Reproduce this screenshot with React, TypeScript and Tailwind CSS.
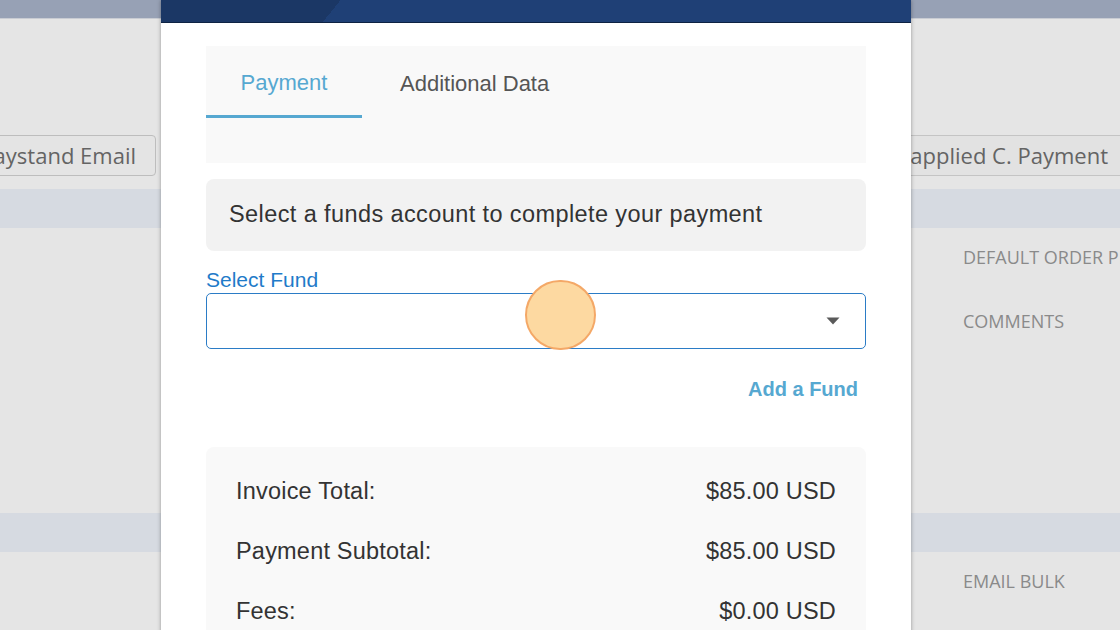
import React from "react";

export default function App() {
  return (
    <div className="relative w-[1120px] h-[630px] overflow-hidden bg-[#e5e5e5] font-['Open_Sans',sans-serif]">
      {/* Background page */}
      <div className="flex flex-col w-full">
        <div className="h-[19px] bg-[#97a1b5] border-b border-[#c9ccd3]" />
        <div className="h-[116px]" />
        <div className="relative h-[41px] flex items-stretch">
          <div className="w-[156px] flex justify-end overflow-hidden">
            <div className="shrink-0 h-[41px] px-[19px] flex items-center rounded-[4px] border border-[#bdbdbd] bg-[#e4e4e4] text-[22px] text-[#646464] whitespace-nowrap">
              Paystand Email
            </div>
          </div>
          <div className="flex-1 flex justify-end mr-[-30px]">
            <div className="shrink-0 h-[41px] pl-[20px] pr-[42px] flex items-center border-y border-[#c4c4c4] bg-[#e2e2e2] text-[22px] text-[#646464] whitespace-nowrap">
              Unapplied C. Payment
            </div>
          </div>
        </div>
        <div className="h-[13px]" />
        <div className="h-[39px] bg-[#d6dae1]" />
        <div className="flex justify-end">
          <div className="w-[157px] flex flex-col text-[18px] text-[#8a8a8a] whitespace-nowrap overflow-hidden">
            <div className="mt-[17px] h-[24px] leading-[24px]">DEFAULT ORDER PREFERENCES</div>
            <div className="mt-[40px] h-[24px] leading-[24px]">COMMENTS</div>
          </div>
        </div>
        <div className="h-[180px]" />
        <div className="h-[39px] bg-[#d6dae1]" />
        <div className="flex justify-end">
          <div className="w-[157px] text-[18px] text-[#8a8a8a] whitespace-nowrap">
            <div className="mt-[17px] h-[24px] leading-[24px]">EMAIL BULK</div>
          </div>
        </div>
      </div>

      {/* Modal */}
      <div className="absolute left-[161px] top-0 w-[750px] h-[640px] bg-white shadow-[0_0_4px_rgba(0,0,0,0.35)] font-['Liberation_Sans',Arial,sans-serif] flex flex-col">
        <div className="h-[23px] shrink-0 bg-[linear-gradient(129deg,#1b3765_23.4%,#1f4076_23.4%)] border-b border-[#0e2343]" />
        <div className="flex flex-col px-[45px] pt-[23px]">
          {/* Tabs */}
          <div className="h-[117px] bg-[#f9f9f9] flex flex-col">
            <div className="flex h-[72px]">
              <div className="w-[156px] flex items-center justify-center border-b-[3px] border-[#56a8d1] text-[22px] text-[#56a8d1] pt-[3px]">
                Payment
              </div>
              <div className="pl-[38px] pr-[38px] flex items-center text-[22px] text-[#555555] pt-[3px]">
                Additional Data
              </div>
            </div>
          </div>

          {/* Info */}
          <div className="mt-[16px] h-[72px] rounded-[8px] bg-[#f2f2f2] flex items-center pl-[23px] text-[23.5px] tracking-[0.4px] text-[#333333]">
            Select a funds account to complete your payment
          </div>

          {/* Select fund */}
          <div className="mt-[16px] h-[26px] leading-[26px] text-[21px] text-[#1f7bc9]">Select Fund</div>
          <div className="relative h-[56px] rounded-[5px] border-[1.5px] border-[#2b7cc6] flex items-center justify-end pr-[25px]">
            <svg width="14" height="8" viewBox="0 0 14 8">
              <path d="M0.5 0.5 L13.5 0.5 L7 7.5 Z" fill="#5a5a5a" />
            </svg>
            <div className="absolute left-[318px] top-[-14px] w-[71px] h-[70px] rounded-full bg-[#fdd9a1] border-[2px] border-[#f4a867]" />
          </div>

          <div className="mt-[28px] flex justify-end pr-[8px] text-[20px] font-bold text-[#56a8d1] h-[24px] leading-[24px]">
            Add a Fund
          </div>

          {/* Summary */}
          <div className="mt-[46px] h-[220px] rounded-[8px] bg-[#f9f9f9] flex flex-col px-[30px] pt-[29px] text-[23.5px] tracking-[0.2px] text-[#333333]">
            <div className="h-[30px] leading-[30px] flex justify-between">
              <span>Invoice Total:</span>
              <span>$85.00 USD</span>
            </div>
            <div className="mt-[30px] h-[30px] leading-[30px] flex justify-between">
              <span>Payment Subtotal:</span>
              <span>$85.00 USD</span>
            </div>
            <div className="mt-[30px] h-[30px] leading-[30px] flex justify-between">
              <span>Fees:</span>
              <span>$0.00 USD</span>
            </div>
          </div>
        </div>
      </div>
    </div>
  );
}
